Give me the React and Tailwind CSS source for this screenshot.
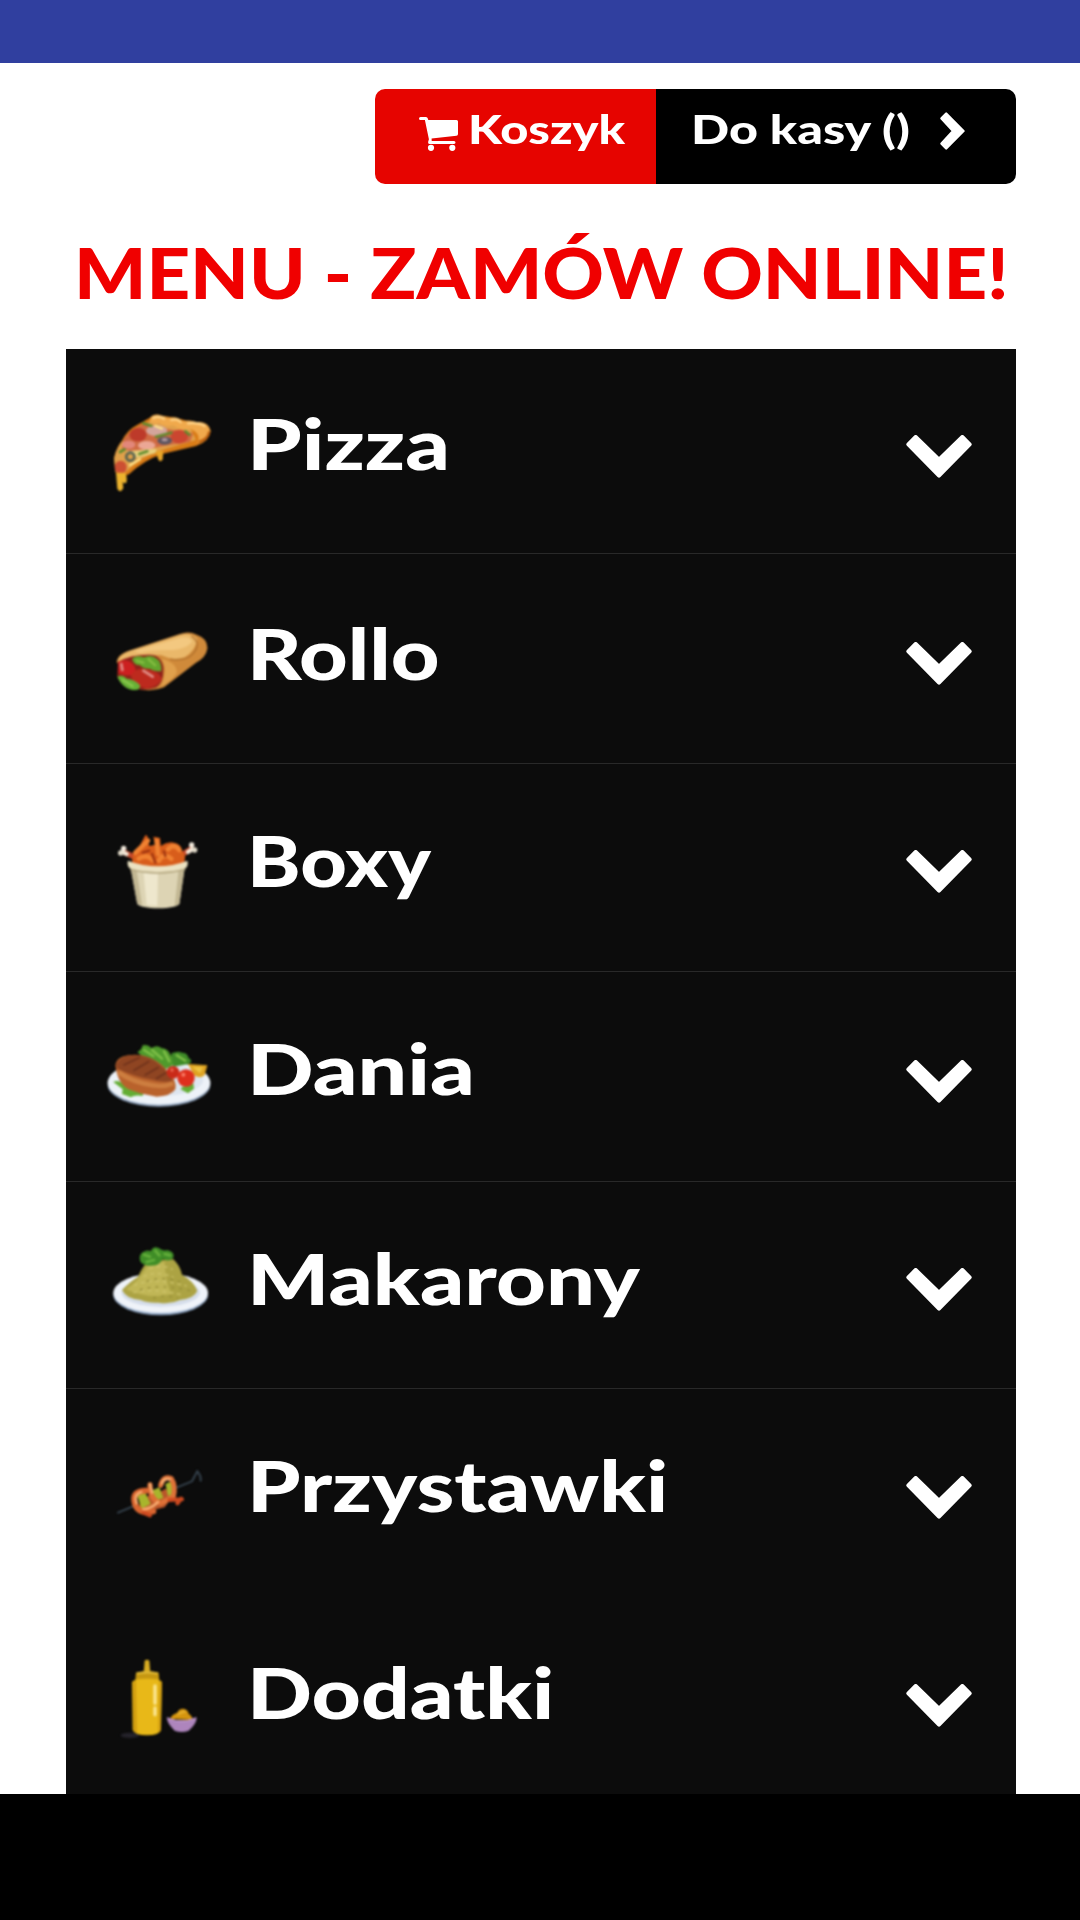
import React from "react";

function PizzaIcon() {
  return (
    <svg viewBox="45 42 324 300" className="w-[108px] h-[100px] blur-[0.8px]" aria-hidden="true">
      <path d="M72 205 Q80 170 96 152 Q112 120 140 106 L185 80 Q240 74 300 96 Q352 92 362 122 Q360 152 318 168 L216 192 Q160 212 118 252 L96 262 L78 252 Z" fill="#d97c17" />
      <path d="M72 205 Q80 165 110 140 L180 92 L300 112 L318 150 L216 180 Q150 200 104 250 L76 246 Z" fill="#e0a04a" />
      <path d="M100 150 Q120 116 170 98 L200 112 L310 130 L300 156 L220 168 L130 186 L96 176 Z" fill="#cf6a42" />
      <path d="M180 94 Q178 72 206 74 Q226 78 236 84 Q262 76 276 94 Q300 88 318 96 Q358 94 361 124 Q356 154 322 160 Q336 130 300 116 Q270 122 250 106 Q222 112 208 98 Q190 106 180 94 Z" fill="#f0a94c" />
      <path d="M190 84 Q206 76 222 86 M244 90 Q262 84 272 96 M294 100 Q326 96 344 108" stroke="#ffd489" strokeWidth="7" fill="none" strokeLinecap="round" />
      <path d="M326 156 Q354 148 358 124" stroke="#b75a0c" strokeWidth="7" fill="none" />
      <ellipse cx="144" cy="134" rx="26" ry="20" fill="#bd3a2a" />
      <ellipse cx="268" cy="140" rx="26" ry="21" fill="#cb4630" />
      <ellipse cx="200" cy="122" rx="32" ry="16" fill="#d3a59c" />
      <ellipse cx="116" cy="164" rx="20" ry="12" fill="#e2877a" />
      <ellipse cx="170" cy="166" rx="26" ry="13" fill="#eba795" />
      <path d="M108 184 L200 176 L196 190 L140 204 Z" fill="#e8cf7c" />
      <ellipse cx="92" cy="232" rx="18" ry="20" fill="#cc4f32" />
      <ellipse cx="224" cy="152" rx="22" ry="12" fill="#5d5560" />
      <ellipse cx="224" cy="149" rx="9" ry="5" fill="#b39aa0" />
      <circle cx="121" cy="200" r="12" fill="none" stroke="#55604f" strokeWidth="8" />
      <path d="M160 100 L184 108 M198 140 L244 128 M148 192 L172 184 M90 186 L104 178 M286 124 L298 134" stroke="#5d8a2c" strokeWidth="8" strokeLinecap="round" />
      <path d="M120 226 L150 208 M196 108 L216 116" stroke="#ffe38a" strokeWidth="7" strokeLinecap="round" />
      <path d="M78 248 L106 248 L110 262 L110 276 Q104 284 98 276 L100 294 Q92 312 82 296 Z" fill="#edb32e" />
      <path d="M198 184 L220 182 L218 208 Q210 220 204 206 Z" fill="#e9a528" />
    </svg>
  );
}

function RolloIcon() {
  return (
    <svg viewBox="45 27 324 300" className="w-[108px] h-[100px] blur-[0.8px]" aria-hidden="true">
      <path d="M80 186 Q84 164 112 154 L270 102 Q296 92 320 104 Q354 116 352 146 Q348 172 318 188 L222 262 Q190 276 150 268 Z" fill="#d08a3a" />
      <path d="M82 184 Q90 162 120 152 L270 104 Q304 96 322 116 Q318 150 284 172 Q250 184 214 166 Q150 158 96 184 Z" fill="#eab86a" />
      <path d="M130 154 L276 112 Q304 110 306 126 Q290 146 250 150 Q190 148 150 158 Z" fill="#f3c880" />
      <path d="M304 108 Q336 130 310 160 Q290 184 240 178" fill="none" stroke="#b0702c" strokeWidth="4" />
      <path d="M84 186 Q120 164 176 164 Q214 164 220 202 Q222 246 200 262 Q164 274 130 264 Q84 252 82 226 Z" fill="#8f2119" />
      <path d="M126 176 Q140 164 162 172 Q186 162 200 176 Q216 184 214 214 Q190 214 180 206 Q160 208 150 196 Q132 196 126 176 Z" fill="#63a52d" />
      <path d="M140 182 L160 188 M176 178 L196 196" stroke="#86bd42" strokeWidth="7" strokeLinecap="round" />
      <path d="M84 186 Q104 176 122 186 Q142 200 136 222 Q112 232 86 220 Z" fill="#cc2020" />
      <path d="M122 228 Q136 200 170 208 Q206 214 216 236 Q206 260 170 266 Q136 260 122 228 Z" fill="#bd2a1e" />
      <path d="M94 192 L97 210 M160 212 L188 230" stroke="#e08f88" strokeWidth="8" strokeLinecap="round" />
      <path d="M82 230 Q98 222 110 236 Q132 236 150 256 Q152 270 136 270 Q100 270 82 230 Z" fill="#67b236" />
      <path d="M98 240 L128 258" stroke="#92cc52" strokeWidth="6" strokeLinecap="round" />
      <path d="M216 176 Q236 216 212 260 Q240 248 260 220 Q264 190 216 176 Z" fill="#e0a04c" />
    </svg>
  );
}

function BoxyIcon() {
  return (
    <svg viewBox="45 27 324 300" className="w-[108px] h-[100px] blur-[0.8px]" aria-hidden="true">
      <path d="M100 126 L140 144 M304 116 L266 140" stroke="#c2482a" strokeWidth="16" strokeLinecap="round" />
      <path d="M96 126 L110 132 M306 118 L294 126" stroke="#f2e6d6" strokeWidth="13" strokeLinecap="round" />
      <circle cx="101" cy="115" r="8" fill="#f5ecdf" />
      <circle cx="92" cy="129" r="8" fill="#e3dccb" />
      <circle cx="305" cy="105" r="8" fill="#f5ecdf" />
      <circle cx="314" cy="120" r="8" fill="#e3dccb" />
      <path d="M126 160 Q126 124 150 106 L166 76 Q174 74 174 90 L178 108 L196 104 L190 80 L210 84 L212 108 Q232 94 252 98 Q274 102 276 122 Q292 136 280 164 L204 176 Z" fill="#d85d1b" />
      <path d="M136 128 Q156 110 174 92 M146 146 Q170 130 188 150 M206 152 Q222 126 244 146 M234 118 Q252 98 268 120 M200 92 L204 132" stroke="#f08232" strokeWidth="14" fill="none" strokeLinecap="round" />
      <path d="M186 132 L196 158 M222 124 L226 138 M158 128 L178 122" stroke="#9e3410" strokeWidth="7" strokeLinecap="round" />
      <path d="M122 174 L284 174 L268 282 Q258 294 206 295 Q152 294 142 282 Z" fill="#ddd4b4" />
      <path d="M122 174 L140 180 L156 286 L142 282 Z M284 174 L266 180 L254 288 L268 282 Z" fill="#c2b793" />
      <path d="M160 182 L204 184 L202 288 L170 286 Z" fill="#eee7cd" />
      <path d="M114 152 Q204 186 292 152 Q296 164 288 174 Q204 200 118 174 Q110 164 114 152 Z" fill="#ebe2c2" />
      <path d="M120 178 Q204 200 286 178" stroke="#b3a67f" strokeWidth="4" fill="none" />
    </svg>
  );
}

function DaniaIcon() {
  return (
    <svg viewBox="45 21 324 300" className="w-[108px] h-[100px] blur-[0.8px]" aria-hidden="true">
      <ellipse cx="207" cy="194" rx="154" ry="66" fill="#8fa3bd" />
      <ellipse cx="207" cy="188" rx="154" ry="66" fill="#edf2f8" />
      <ellipse cx="212" cy="180" rx="128" ry="48" fill="#dde5ef" />
      <path d="M142 96 Q154 92 158 76 Q174 72 184 84 Q202 74 214 84 Q236 86 242 106 Q262 112 256 132 L226 148 L170 120 Z" fill="#4f9a2c" />
      <path d="M244 100 Q264 92 276 98 Q292 98 296 114 Q312 124 296 132 L250 140 Z" fill="#3f8b28" />
      <path d="M162 90 L190 108 M186 90 L216 116 M222 94 L238 124 M260 106 L286 122" stroke="#80c048" strokeWidth="7" strokeLinecap="round" />
      <path d="M70 186 Q84 178 100 192 L134 206 L160 218 L158 228 Q134 224 122 232 L96 222 L98 208 Z M276 202 L310 190 L312 206 L294 220 L272 208 Z" fill="#63ad33" />
      <path d="M294 132 L352 136 L344 166 Q330 178 312 166 Z" fill="#dfa322" />
      <path d="M306 140 L340 142 L330 160 Z" fill="#eec442" />
      <path d="M76 134 Q80 112 114 106 Q150 100 182 114 Q220 132 232 154 Q262 180 256 208 Q240 230 200 230 Q148 222 116 208 Q82 190 76 134 Z" fill="#b9622c" />
      <path d="M78 134 Q88 112 120 106 Q160 102 194 122 Q230 146 248 182 Q220 190 180 178 Q128 168 82 146 Z" fill="#8f4522" />
      <path d="M84 156 Q130 188 190 196 Q220 202 250 190" stroke="#cd7e40" strokeWidth="14" fill="none" />
      <path d="M100 136 L150 112 M130 152 L178 124 M164 166 L206 142 M198 176 L228 158" stroke="#6f321b" strokeWidth="5" />
      <circle cx="249" cy="157" r="19" fill="#c92a18" />
      <circle cx="288" cy="174" r="26" fill="#de2f1c" />
      <circle cx="280" cy="164" r="6" fill="#f97f68" />
      <circle cx="246" cy="150" r="5" fill="#ee6a54" />
    </svg>
  );
}

function MakaronyIcon() {
  return (
    <svg viewBox="45 51 324 300" className="w-[108px] h-[100px] blur-[0.8px]" aria-hidden="true">
      <ellipse cx="212" cy="224" rx="142" ry="62" fill="#8fa6c4" />
      <ellipse cx="212" cy="219" rx="142" ry="60" fill="#eff3f9" />
      <ellipse cx="212" cy="218" rx="118" ry="42" fill="#d5ddea" />
      <path d="M96 210 Q120 184 144 170 Q158 138 176 122 L250 118 Q270 136 276 164 Q312 184 322 212 Q314 234 270 240 Q240 254 206 248 Q174 250 152 240 Q110 238 96 210 Z" fill="#aca343" />
      <path d="M108 208 Q150 180 172 138 Q196 124 224 126 Q226 186 244 222 Q180 240 108 208 Z" fill="#c0b656" />
      <path d="M160 170 Q200 150 250 172 M132 196 Q190 170 290 198 M130 218 Q190 202 280 226 M178 146 Q214 132 248 148" stroke="#cfc56c" strokeWidth="4" fill="none" strokeDasharray="12 10" />
      <path d="M170 184 Q220 166 270 186 M150 210 Q210 190 300 212 M190 234 Q230 222 264 236" stroke="#938b35" strokeWidth="4" fill="none" strokeDasharray="8 16" />
      <path d="M150 122 Q144 98 168 92 Q178 90 182 94 Q190 76 206 84 Q218 94 232 90 Q256 96 250 114 Q240 126 218 118 Q210 132 196 136 Q160 142 150 122 Z" fill="#3f8d27" />
      <path d="M162 104 L180 110 M196 92 L208 106 M224 102 L240 106 M170 126 L192 120" stroke="#66b03c" strokeWidth="8" strokeLinecap="round" />
    </svg>
  );
}

function PrzystawkiIcon() {
  return (
    <svg viewBox="45 42 324 300" className="w-[108px] h-[100px] blur-[0.8px]" aria-hidden="true">
      <path d="M84 248 L136 226 M252 176 L306 154 L322 124 Q334 138 332 152" stroke="#35424d" strokeWidth="6" fill="none" strokeLinecap="round" />
      <path d="M150 200 Q190 200 226 176 L250 196 L224 232 L176 244 L148 236 Z" fill="#b9562a" />
      <path d="M142 196 L164 184 L182 222 L154 236 Z M184 182 L208 172 L220 204 L194 212 Z M226 162 L246 152 L256 190 L234 198 Z" fill="#a8b52c" />
      <path d="M168 182 Q126 182 134 218 Q142 254 190 244" stroke="#d9652f" strokeWidth="18" fill="none" strokeLinecap="round" />
      <path d="M180 164 Q178 208 212 220" stroke="#dd6e34" strokeWidth="15" fill="none" strokeLinecap="round" />
      <path d="M212 166 Q220 136 244 146 Q258 168 250 200 L220 216" stroke="#df7238" strokeWidth="15" fill="none" strokeLinecap="round" />
      <path d="M154 186 Q130 192 140 220 M180 162 L186 188 M216 160 Q222 142 240 148 M160 238 Q184 236 204 216" stroke="#f7ab70" strokeWidth="8" fill="none" strokeLinecap="round" />
      <path d="M160 248 L180 256 M238 210 L276 208 M262 220 L274 206" stroke="#cf4a20" strokeWidth="12" strokeLinecap="round" />
    </svg>
  );
}

function DodatkiIcon() {
  return (
    <svg viewBox="45 36 324 300" className="w-[108px] h-[100px] blur-[0.8px]" aria-hidden="true">
      <ellipse cx="120" cy="286" rx="28" ry="8" fill="#24222a" />
      <path d="M164 62 Q171 56 178 62 L181 98 L161 98 Z" fill="#d9ad22" />
      <path d="M138 98 Q171 88 206 98 L208 120 L136 120 Z" fill="#c69812" />
      <path d="M126 126 Q130 116 171 116 Q212 116 216 126 L213 270 Q208 286 171 286 Q134 286 128 270 Z" fill="#e8b818" />
      <path d="M128 126 L138 122 L141 280 L130 272 Z M208 122 L215 126 L212 272 L204 280 Z" fill="#d29e10" />
      <path d="M195 138 L195 190 M195 204 L195 224" stroke="#fbe694" strokeWidth="10" strokeLinecap="round" />
      <path d="M140 100 Q171 94 204 100" stroke="#e8c23f" strokeWidth="5" fill="none" />
      <path d="M240 236 Q246 222 262 218 Q266 206 280 206 Q296 210 296 222 Q306 226 308 240 Z" fill="#d5950f" />
      <path d="M264 222 L284 214" stroke="#e6b02c" strokeWidth="7" strokeLinecap="round" />
      <path d="M230 232 Q274 250 320 232 Q320 252 296 272 Q276 280 254 272 Q232 252 230 232 Z" fill="#ae85bd" />
      <path d="M232 234 Q274 252 318 234" stroke="#c09bcb" strokeWidth="4" fill="none" />
    </svg>
  );
}

const categories = [
  { label: "Pizza", Icon: PizzaIcon, row: "h-[205px] border-b", text: "pt-[50px] scale-x-[1.23]", arrow: "pt-[86px]" },
  { label: "Rollo", Icon: RolloIcon, row: "h-[210px] border-b", text: "pt-[55px] scale-x-[1.19]", arrow: "pt-[88px]" },
  { label: "Boxy", Icon: BoxyIcon, row: "h-[208px] border-b", text: "pt-[52px] scale-x-[1.14]", arrow: "pt-[86px]" },
  { label: "Dania", Icon: DaniaIcon, row: "h-[210px] border-b", text: "pt-[52px] scale-x-[1.235]", arrow: "pt-[88px]" },
  { label: "Makarony", Icon: MakaronyIcon, row: "h-[207px] border-b", text: "pt-[52px] scale-x-[1.22]", arrow: "pt-[86px]" },
  { label: "Przystawki", Icon: PrzystawkiIcon, row: "h-[208px]", text: "pt-[52px] scale-x-[1.205]", arrow: "pt-[87px]" },
  { label: "Dodatki", Icon: DodatkiIcon, row: "h-[197px]", text: "pt-[51px] scale-x-[1.205]", arrow: "pt-[87px]" },
];

function CategoryRow({ label, Icon, row, text, arrow }) {
  return (
    <button className={`flex items-start w-full pl-[39px] pr-11 text-left border-[#292929] ${row}`}>
      <span className="pt-[55px]">
        <Icon />
      </span>
      <span className={`ml-[34px] mr-auto origin-left text-[71px] leading-[88px] font-black text-white ${text}`}>{label}</span>
      <span className={arrow}>
        <svg viewBox="78 103 196 129" className="w-[66px] h-[43px]" aria-hidden="true">
          <path d="M106 109 L176 177 L246 109 L268 131 L176 225 L84 131 Z" fill="#fff" stroke="#fff" strokeWidth="12" strokeLinejoin="round" />
        </svg>
      </span>
    </button>
  );
}

export default function App() {
  return (
    <div className="flex flex-col w-full h-[1920px] overflow-hidden bg-white font-['Lato','Open_Sans',sans-serif]">
      <div className="h-[63px] shrink-0 bg-[#303f9f]" />

      <main className="flex-1 pl-[66px] pr-16 pt-[26px]">
        {/* Basket / checkout */}
        <div className="flex ml-[309px] w-[641px] h-[95px] rounded-[10px] overflow-hidden text-white text-[40px] leading-[48px] font-black">
          <button className="flex items-start w-[281px] bg-[#e60400] pl-[44px] pt-[16px]">
            <svg viewBox="0 0 39 34" className="w-[39px] h-[34px] mt-[12px]" fill="#fff" aria-hidden="true">
              <path d="M0 1.5 Q0 0 1.5 0 H7 Q8.4 0 8.8 1.5 L9.3 3 H37.5 Q39 3 39 4.6 V17 Q39 18.5 37.5 18.7 L12.6 21.6 L12.7 24 H35 Q36.5 24 36.5 25.6 Q36.5 27 35 27 H10.5 Q8.8 27 9.1 25 L9.9 22.2 L5.9 3.1 H1.5 Q0 3.1 0 1.5 Z" />
              <circle cx="12" cy="30.8" r="3.1" />
              <circle cx="33.3" cy="30.8" r="3.1" />
            </svg>
            <span className="ml-[10px] origin-left scale-x-[1.22]">Koszyk</span>
          </button>
          <button className="flex items-start flex-1 bg-black pl-[35px] pr-[51px] pt-[16px]">
            <span className="mr-auto origin-left whitespace-nowrap scale-x-[1.255]">Do kasy ()</span>
            <svg viewBox="0 0 25 38" className="w-[25px] h-[38px] mt-[7px]" aria-hidden="true">
              <path d="M6.2 1.5 L23.5 19 L6.2 36.5 L1.5 31.6 L13 19 L1.5 6.4 Z" fill="#fff" stroke="#fff" strokeWidth="2.4" strokeLinejoin="round" />
            </svg>
          </button>
        </div>

        <h1 className="mt-[44px] ml-[8px] w-fit h-[121px] whitespace-nowrap origin-left scale-x-[1.072] text-[71px] leading-[88px] font-black text-[#f00000]">
          MENU - ZAMÓW ONLINE!
        </h1>

        <div className="bg-[#0c0c0c]">
          {categories.map((category) => (
            <CategoryRow key={category.label} {...category} />
          ))}
        </div>
      </main>

      <div className="h-[126px] shrink-0 bg-black" />
    </div>
  );
}
